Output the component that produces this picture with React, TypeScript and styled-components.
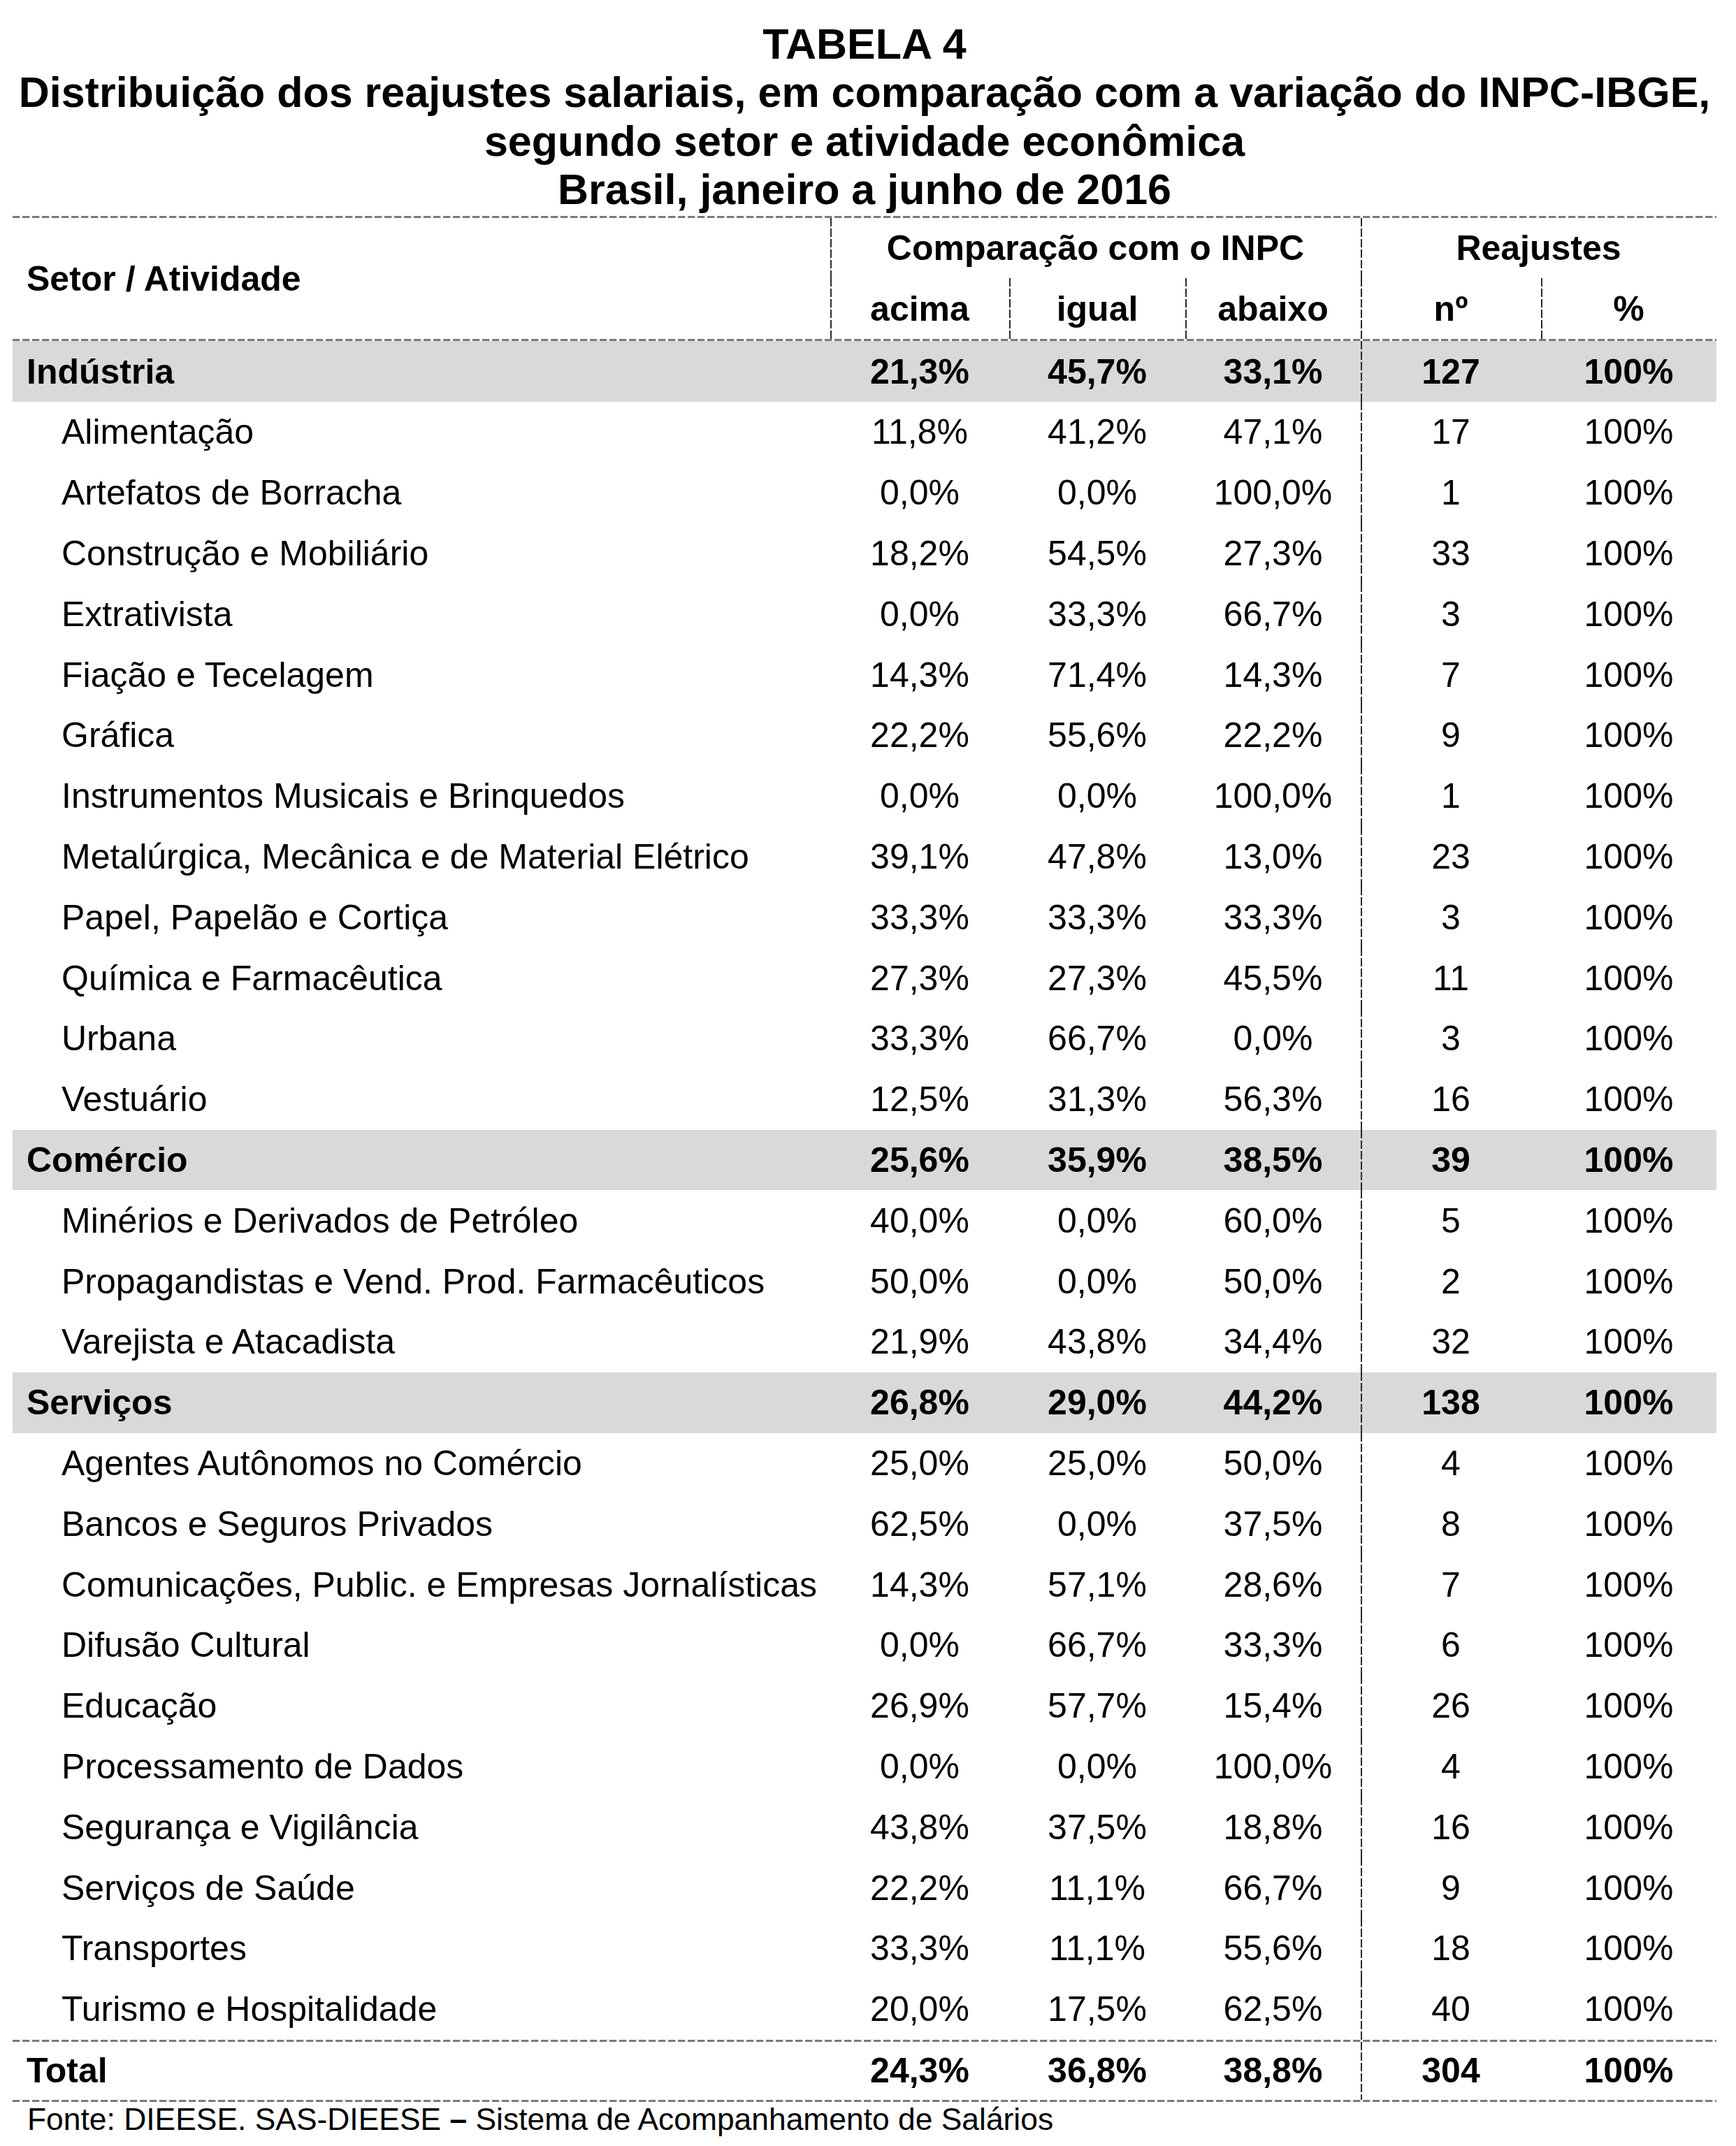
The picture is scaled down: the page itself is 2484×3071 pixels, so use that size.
import React from "react";
import styled, { createGlobalStyle } from "styled-components";

const Global = createGlobalStyle`
  html, body { margin: 0; padding: 0; background: #ffffff; }
  body { font-family: "Liberation Sans", Arial, sans-serif; color: #000; }
`;

const COLS = "1170px 256px 252px 251px 258px 251px";

const Page = styled.div`
  width: 2484px;
  padding: 29px 0 0 18px;
  box-sizing: border-box;
`;

const Sheet = styled.div`
  width: 2438px;
  display: flex;
  flex-direction: column;
`;

const Title = styled.h1`
  margin: 0 0 3px 0;
  font-size: 61px;
  line-height: 69.3px;
  font-weight: 700;
  text-align: center;
`;

const Rule = styled.div`
  height: 3px;
  background: repeating-linear-gradient(to right, #7a7a7a 0 10px, #d0d0d0 10px 11px, transparent 11px 14px);
`;

const vline = (color: string) =>
  `repeating-linear-gradient(to bottom, ${color} 0 12px, transparent 12px 15px) left top / 2px 100% no-repeat`;

const Header = styled.div`
  display: grid;
  grid-template-columns: ${COLS};
  grid-template-rows: 86px 87px;
  font-weight: 700;
  font-size: 50px;
`;

const HeadCell = styled.div<{ $col: string; $row: string; $align?: "left" | "center"; $divider?: boolean }>`
  grid-column: ${(p) => p.$col};
  grid-row: ${(p) => p.$row};
  display: flex;
  align-items: center;
  justify-content: ${(p) => (p.$align === "left" ? "flex-start" : "center")};
  padding-left: ${(p) => (p.$align === "left" ? "20px" : "0")};
  background: ${(p) => (p.$divider ? vline("#2a2a2a") : "none")};
  white-space: nowrap;
`;

const Row = styled.div<{ $kind: "sector" | "item" | "total" }>`
  display: grid;
  grid-template-columns: ${COLS};
  height: ${(p) => (p.$kind === "total" ? "83px" : "86.8px")};
  background: ${(p) => (p.$kind === "sector" ? "#d9d9d9" : "transparent")};
  font-weight: ${(p) => (p.$kind === "item" ? 400 : 700)};
  font-size: 50px;
`;

const Label = styled.div<{ $indent: boolean }>`
  display: flex;
  align-items: center;
  padding-left: ${(p) => (p.$indent ? "70px" : "20px")};
  white-space: nowrap;
`;

const Num = styled.div<{ $divider?: boolean }>`
  display: flex;
  align-items: center;
  justify-content: center;
  background: ${(p) => (p.$divider ? vline("#2a2a2a") : "none")};
  white-space: nowrap;
`;

const Footer = styled.div`
  font-size: 44.4px;
  line-height: 50px;
  padding-left: 21px;
  white-space: nowrap;
`;

const Dash = styled.span`
  font-weight: 700;
`;

type Line = { label: string; kind: "sector" | "item"; v: [string, string, string, string] };

const data: Line[] = [
  { label: "Indústria", kind: "sector", v: ["21,3%", "45,7%", "33,1%", "127"] },
  { label: "Alimentação", kind: "item", v: ["11,8%", "41,2%", "47,1%", "17"] },
  { label: "Artefatos de Borracha", kind: "item", v: ["0,0%", "0,0%", "100,0%", "1"] },
  { label: "Construção e Mobiliário", kind: "item", v: ["18,2%", "54,5%", "27,3%", "33"] },
  { label: "Extrativista", kind: "item", v: ["0,0%", "33,3%", "66,7%", "3"] },
  { label: "Fiação e Tecelagem", kind: "item", v: ["14,3%", "71,4%", "14,3%", "7"] },
  { label: "Gráfica", kind: "item", v: ["22,2%", "55,6%", "22,2%", "9"] },
  { label: "Instrumentos Musicais e Brinquedos", kind: "item", v: ["0,0%", "0,0%", "100,0%", "1"] },
  { label: "Metalúrgica, Mecânica e de Material Elétrico", kind: "item", v: ["39,1%", "47,8%", "13,0%", "23"] },
  { label: "Papel, Papelão e Cortiça", kind: "item", v: ["33,3%", "33,3%", "33,3%", "3"] },
  { label: "Química e Farmacêutica", kind: "item", v: ["27,3%", "27,3%", "45,5%", "11"] },
  { label: "Urbana", kind: "item", v: ["33,3%", "66,7%", "0,0%", "3"] },
  { label: "Vestuário", kind: "item", v: ["12,5%", "31,3%", "56,3%", "16"] },
  { label: "Comércio", kind: "sector", v: ["25,6%", "35,9%", "38,5%", "39"] },
  { label: "Minérios e Derivados de Petróleo", kind: "item", v: ["40,0%", "0,0%", "60,0%", "5"] },
  { label: "Propagandistas e Vend. Prod. Farmacêuticos", kind: "item", v: ["50,0%", "0,0%", "50,0%", "2"] },
  { label: "Varejista e Atacadista", kind: "item", v: ["21,9%", "43,8%", "34,4%", "32"] },
  { label: "Serviços", kind: "sector", v: ["26,8%", "29,0%", "44,2%", "138"] },
  { label: "Agentes Autônomos no Comércio", kind: "item", v: ["25,0%", "25,0%", "50,0%", "4"] },
  { label: "Bancos e Seguros Privados", kind: "item", v: ["62,5%", "0,0%", "37,5%", "8"] },
  { label: "Comunicações, Public. e Empresas Jornalísticas", kind: "item", v: ["14,3%", "57,1%", "28,6%", "7"] },
  { label: "Difusão Cultural", kind: "item", v: ["0,0%", "66,7%", "33,3%", "6"] },
  { label: "Educação", kind: "item", v: ["26,9%", "57,7%", "15,4%", "26"] },
  { label: "Processamento de Dados", kind: "item", v: ["0,0%", "0,0%", "100,0%", "4"] },
  { label: "Segurança e Vigilância", kind: "item", v: ["43,8%", "37,5%", "18,8%", "16"] },
  { label: "Serviços de Saúde", kind: "item", v: ["22,2%", "11,1%", "66,7%", "9"] },
  { label: "Transportes", kind: "item", v: ["33,3%", "11,1%", "55,6%", "18"] },
  { label: "Turismo e Hospitalidade", kind: "item", v: ["20,0%", "17,5%", "62,5%", "40"] },
];

function DataRow({ label, kind, v }: { label: string; kind: "sector" | "item" | "total"; v: string[] }) {
  return (
    <Row $kind={kind}>
      <Label $indent={kind === "item"}>{label}</Label>
      <Num>{v[0]}</Num>
      <Num>{v[1]}</Num>
      <Num>{v[2]}</Num>
      <Num $divider>{v[3]}</Num>
      <Num>100%</Num>
    </Row>
  );
}

export default function App() {
  return (
    <>
      <Global />
      <Page>
        <Sheet>
          <Title>
            TABELA 4
            <br />
            Distribuição dos reajustes salariais, em comparação com a variação do INPC-IBGE,
            <br />
            segundo setor e atividade econômica
            <br />
            Brasil, janeiro a junho de 2016
          </Title>
          <Rule />
          <Header>
            <HeadCell $col="1" $row="1 / span 2" $align="left">Setor / Atividade</HeadCell>
            <HeadCell $col="2 / span 3" $row="1" $divider>Comparação com o INPC</HeadCell>
            <HeadCell $col="5 / span 2" $row="1" $divider>Reajustes</HeadCell>
            <HeadCell $col="2" $row="2" $divider>acima</HeadCell>
            <HeadCell $col="3" $row="2" $divider>igual</HeadCell>
            <HeadCell $col="4" $row="2" $divider>abaixo</HeadCell>
            <HeadCell $col="5" $row="2" $divider>nº</HeadCell>
            <HeadCell $col="6" $row="2" $divider>%</HeadCell>
          </Header>
          <Rule />
          {data.map((d) => (
            <DataRow key={d.label} label={d.label} kind={d.kind} v={d.v} />
          ))}
          <Rule />
          <DataRow label="Total" kind="total" v={["24,3%", "36,8%", "38,8%", "304"]} />
          <Rule />
          <Footer>
            Fonte: DIEESE. SAS-DIEESE <Dash>–</Dash> Sistema de Acompanhamento de Salários
          </Footer>
        </Sheet>
      </Page>
    </>
  );
}
